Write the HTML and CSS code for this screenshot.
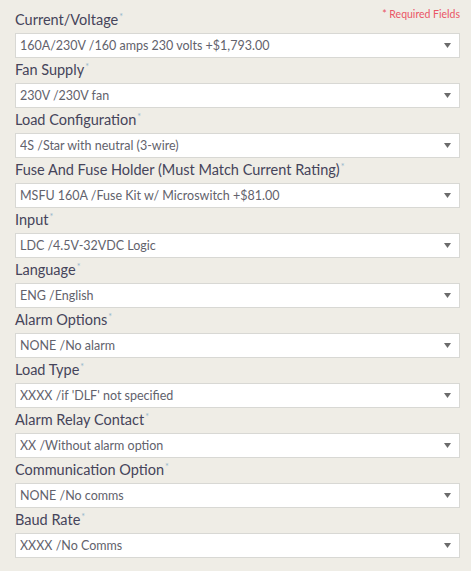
FILE: index.html
```html
<!DOCTYPE html>
<html lang="en">
<head>
  <meta charset="UTF-8" />
  <meta name="viewport" content="width=device-width, initial-scale=1.0"/>
  <title>Product Options</title>
  <link rel="stylesheet" href="styles.css">
</head>
<body>
  <form class="options">
    <p class="required-note">* Required Fields</p>

    <div class="field">
      <label>Current/Voltage<em>*</em></label>
      <div class="select-wrap">
        <select><option>160A/230V /160 amps 230 volts +$1,793.00</option></select>
        <svg class="arrow" width="7" height="5" viewBox="0 0 7 5"><path d="M0 0H7L3.5 5Z"/></svg>
      </div>
    </div>

    <div class="field">
      <label>Fan Supply<em>*</em></label>
      <div class="select-wrap">
        <select><option>230V /230V fan</option></select>
        <svg class="arrow" width="7" height="5" viewBox="0 0 7 5"><path d="M0 0H7L3.5 5Z"/></svg>
      </div>
    </div>

    <div class="field">
      <label>Load Configuration<em>*</em></label>
      <div class="select-wrap">
        <select><option>4S /Star with neutral (3-wire)</option></select>
        <svg class="arrow" width="7" height="5" viewBox="0 0 7 5"><path d="M0 0H7L3.5 5Z"/></svg>
      </div>
    </div>

    <div class="field">
      <label>Fuse And Fuse Holder (Must Match Current Rating)<em>*</em></label>
      <div class="select-wrap">
        <select><option>MSFU 160A /Fuse Kit w/ Microswitch +$81.00</option></select>
        <svg class="arrow" width="7" height="5" viewBox="0 0 7 5"><path d="M0 0H7L3.5 5Z"/></svg>
      </div>
    </div>

    <div class="field">
      <label>Input<em>*</em></label>
      <div class="select-wrap">
        <select><option>LDC /4.5V-32VDC Logic</option></select>
        <svg class="arrow" width="7" height="5" viewBox="0 0 7 5"><path d="M0 0H7L3.5 5Z"/></svg>
      </div>
    </div>

    <div class="field">
      <label>Language<em>*</em></label>
      <div class="select-wrap">
        <select><option>ENG /English</option></select>
        <svg class="arrow" width="7" height="5" viewBox="0 0 7 5"><path d="M0 0H7L3.5 5Z"/></svg>
      </div>
    </div>

    <div class="field">
      <label>Alarm Options<em>*</em></label>
      <div class="select-wrap">
        <select><option>NONE /No alarm</option></select>
        <svg class="arrow" width="7" height="5" viewBox="0 0 7 5"><path d="M0 0H7L3.5 5Z"/></svg>
      </div>
    </div>

    <div class="field">
      <label>Load Type<em>*</em></label>
      <div class="select-wrap">
        <select><option>XXXX /if 'DLF' not specified</option></select>
        <svg class="arrow" width="7" height="5" viewBox="0 0 7 5"><path d="M0 0H7L3.5 5Z"/></svg>
      </div>
    </div>

    <div class="field">
      <label>Alarm Relay Contact<em>*</em></label>
      <div class="select-wrap">
        <select><option>XX /Without alarm option</option></select>
        <svg class="arrow" width="7" height="5" viewBox="0 0 7 5"><path d="M0 0H7L3.5 5Z"/></svg>
      </div>
    </div>

    <div class="field">
      <label>Communication Option<em>*</em></label>
      <div class="select-wrap">
        <select><option>NONE /No comms</option></select>
        <svg class="arrow" width="7" height="5" viewBox="0 0 7 5"><path d="M0 0H7L3.5 5Z"/></svg>
      </div>
    </div>

    <div class="field">
      <label>Baud Rate<em>*</em></label>
      <div class="select-wrap">
        <select><option>XXXX /No Comms</option></select>
        <svg class="arrow" width="7" height="5" viewBox="0 0 7 5"><path d="M0 0H7L3.5 5Z"/></svg>
      </div>
    </div>
  </form>
</body>
</html>
```

FILE: styles.css
```css
body {
  margin: 0;
  background: #efede6;
  font-family: Lato, "Liberation Sans", sans-serif;
}

.options {
  position: relative;
  width: 445px;
  padding: 8px 0 0 15px;
}

.required-note {
  position: absolute;
  top: 8px;
  right: 0;
  margin: 0;
  font-size: 10.5px;
  color: #ea5565;
}

.field label {
  display: block;
  height: 25px;
  line-height: 18px;
  font-size: 14.5px;
  color: #45445a;
}

.field label em {
  font-style: normal;
  font-size: 9px;
  vertical-align: 5px;
  margin-left: 1px;
  color: #95b7cc;
}

.select-wrap {
  position: relative;
}

.select-wrap select {
  display: block;
  width: 445px;
  height: 25px;
  margin: 0;
  padding: 0 0 0 4px;
  border: 1px solid #d8d8d4;
  border-radius: 0;
  background: #fff;
  font-family: Lato, "Liberation Sans", sans-serif;
  font-size: 12.5px;
  color: #62626c;
  appearance: none;
  -webkit-appearance: none;
  outline: none;
}

.arrow {
  position: absolute;
  top: 10px;
  right: 9px;
  fill: #6b6b6b;
  pointer-events: none;
}
```
